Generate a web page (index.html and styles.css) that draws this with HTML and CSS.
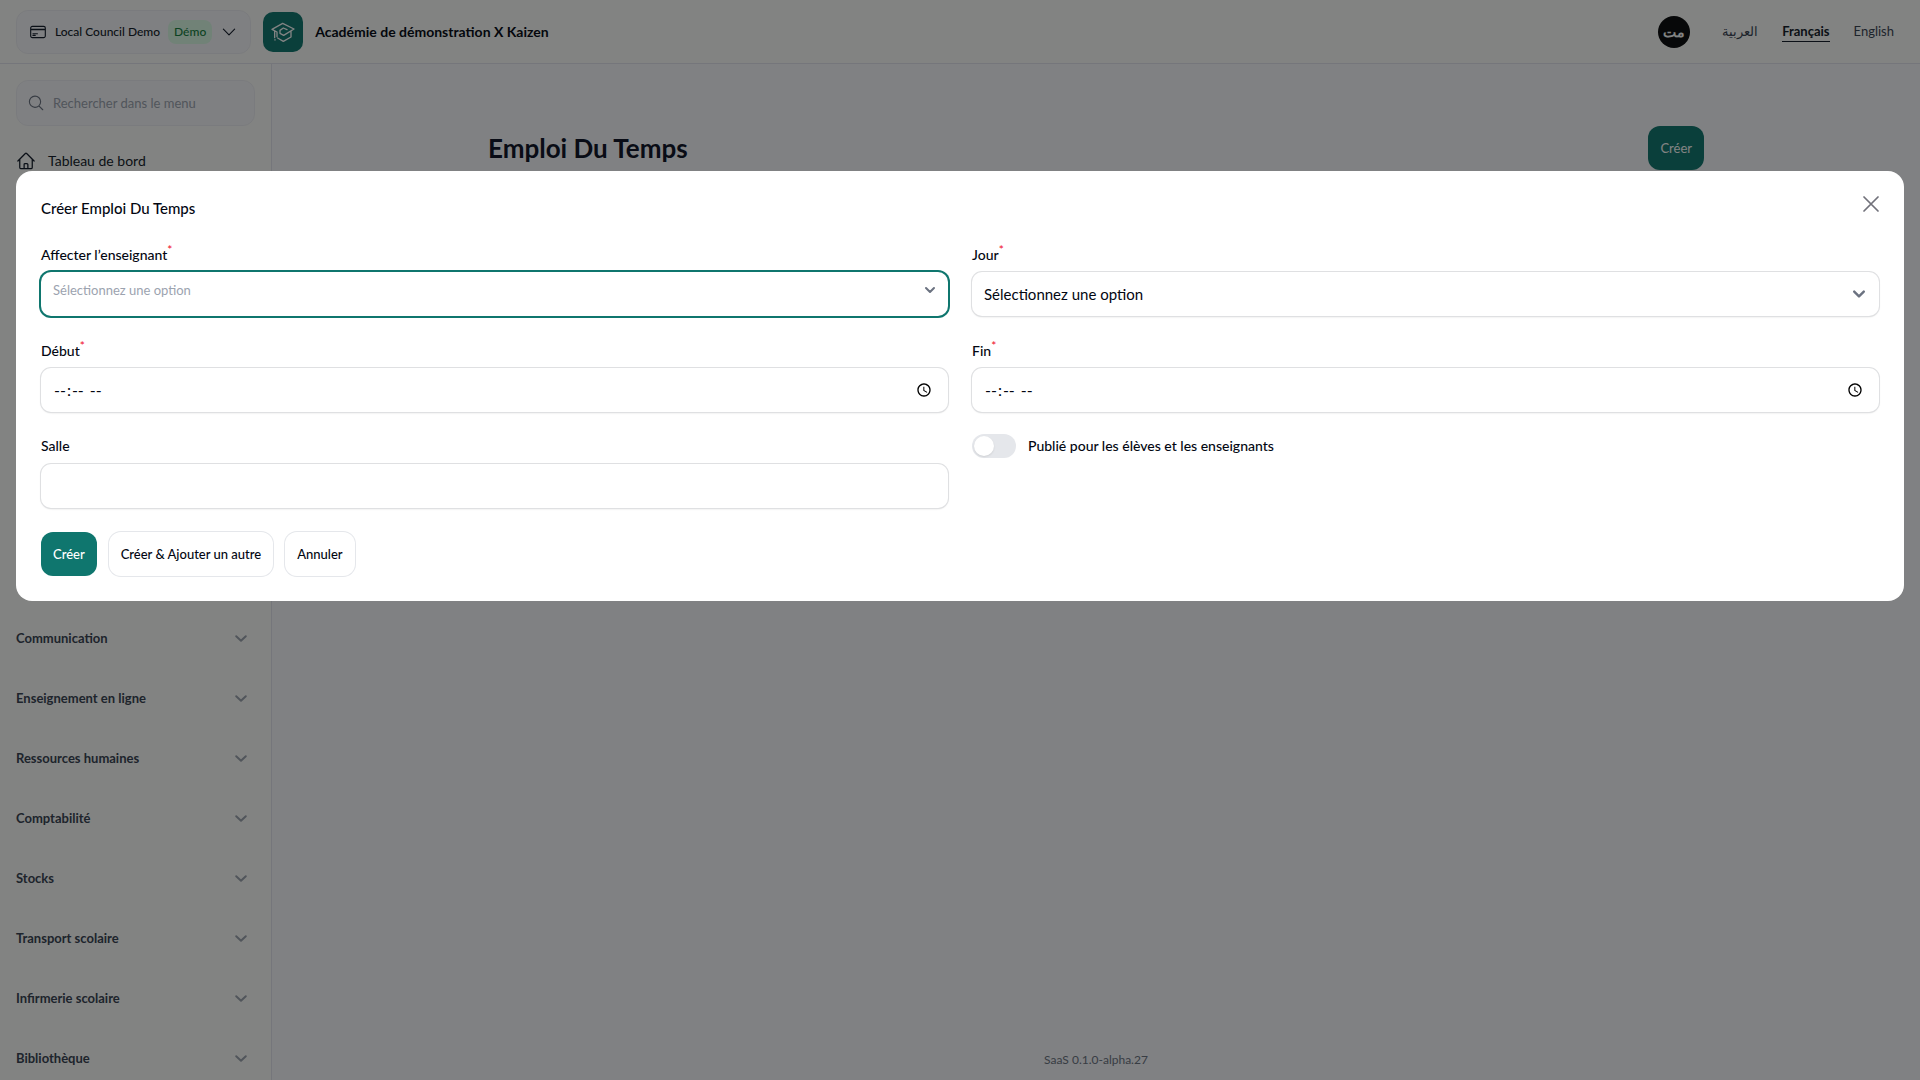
FILE: index.html
```
<!DOCTYPE html>
<html lang="fr">
<head>
    <meta charset="UTF-8">
    <meta name="viewport" content="width=device-width, initial-scale=1.0">
    <title>Emploi Du Temps</title>
    <link rel="stylesheet" href="styles.css">
</head>
<body>
    <header class="topbar">
        <button type="button" class="tenant-btn">
            <svg class="icon icon-sm" viewBox="0 0 24 24"><path d="M2.25 8.25h19.5M2.25 9h19.5m-16.5 5.25h6m-6 2.25h3m-3.75 3h15a2.25 2.25 0 0 0 2.25-2.25V6.75A2.25 2.25 0 0 0 19.5 4.5h-15a2.25 2.25 0 0 0-2.25 2.25v10.5A2.25 2.25 0 0 0 4.5 19.5Z"/></svg>
            <span>Local Council Demo</span>
            <span class="badge">Démo</span>
            <svg class="icon icon-sm" viewBox="0 0 24 24"><path d="m19.5 8.25-7.5 7.5-7.5-7.5"/></svg>
        </button>
        <a href="#" class="brand">
            <span class="brand-logo">
                <svg viewBox="0 0 72 66"><path d="M3 25 35 7 69 24 38 43 27 37V28L37 21 48 26M3 25 18 33V47M11 30V50M12 56v1M60 30V48L37 61 20 51"/></svg>
            </span>
            <span class="brand-name">Académie de démonstration X Kaizen</span>
        </a>
        <div class="topbar-end">
            <button type="button" class="avatar" lang="ar">مت</button>
            <nav class="langs">
                <a href="#" lang="ar">العربية</a>
                <a href="#" class="active">Français</a>
                <a href="#" lang="en">English</a>
            </nav>
        </div>
    </header>

    <div class="layout">
        <aside class="sidebar">
            <label class="search">
                <svg class="icon icon-sm" viewBox="0 0 24 24"><path d="m21 21-5.2-5.2m0 0A7.5 7.5 0 1 0 5.2 5.2a7.5 7.5 0 0 0 10.6 10.6Z"/></svg>
                <input type="search" placeholder="Rechercher dans le menu" aria-label="Rechercher dans le menu">
            </label>
            <a href="#" class="nav-item">
                <svg class="icon" viewBox="0 0 24 24"><path d="m2.25 12 8.95-8.95c.44-.44 1.15-.44 1.6 0L21.75 12M4.5 9.75v10.13c0 .62.5 1.12 1.13 1.12H9.75v-4.87c0-.63.5-1.13 1.13-1.13h2.25c.62 0 1.12.5 1.12 1.13V21h4.13c.62 0 1.12-.5 1.12-1.12V9.75M8.25 21h8.25"/></svg>
                Tableau de bord
            </a>
            <div class="nav-groups">
                <button type="button" class="nav-group">Communication <svg class="chevron" viewBox="0 0 20 20"><path d="m5.2 8.2 4.8 4.6 4.8-4.6"/></svg></button>
                <button type="button" class="nav-group">Enseignement en ligne <svg class="chevron" viewBox="0 0 20 20"><path d="m5.2 8.2 4.8 4.6 4.8-4.6"/></svg></button>
                <button type="button" class="nav-group">Ressources humaines <svg class="chevron" viewBox="0 0 20 20"><path d="m5.2 8.2 4.8 4.6 4.8-4.6"/></svg></button>
                <button type="button" class="nav-group">Comptabilité <svg class="chevron" viewBox="0 0 20 20"><path d="m5.2 8.2 4.8 4.6 4.8-4.6"/></svg></button>
                <button type="button" class="nav-group">Stocks <svg class="chevron" viewBox="0 0 20 20"><path d="m5.2 8.2 4.8 4.6 4.8-4.6"/></svg></button>
                <button type="button" class="nav-group">Transport scolaire <svg class="chevron" viewBox="0 0 20 20"><path d="m5.2 8.2 4.8 4.6 4.8-4.6"/></svg></button>
                <button type="button" class="nav-group">Infirmerie scolaire <svg class="chevron" viewBox="0 0 20 20"><path d="m5.2 8.2 4.8 4.6 4.8-4.6"/></svg></button>
                <button type="button" class="nav-group">Bibliothèque <svg class="chevron" viewBox="0 0 20 20"><path d="m5.2 8.2 4.8 4.6 4.8-4.6"/></svg></button>
            </div>
        </aside>

        <main class="main">
            <div class="page-header">
                <h1>Emploi Du Temps</h1>
                <button type="button" class="btn btn-primary btn-page">Créer</button>
            </div>
            <footer class="footer">SaaS 0.1.0-alpha.27</footer>
        </main>
    </div>

    <!-- Create modal -->
    <div class="overlay">
        <form class="modal" role="dialog" aria-labelledby="modalTitle">
            <div class="modal-header">
                <h2 id="modalTitle">Créer Emploi Du Temps</h2>
                <button type="button" class="close-btn" aria-label="Fermer">
                    <svg class="icon" viewBox="0 0 24 24"><path d="M6 18 18 6M6 6l12 12"/></svg>
                </button>
            </div>
            <div class="fields">
                <div class="field">
                    <label for="teacher">Affecter l’enseignant<sup>*</sup></label>
                    <select id="teacher" class="control control-focus">
                        <option>Sélectionnez une option</option>
                    </select>
                </div>
                <div class="field">
                    <label for="day">Jour<sup>*</sup></label>
                    <select id="day" class="control">
                        <option>Sélectionnez une option</option>
                    </select>
                </div>
                <div class="field">
                    <label for="start">Début<sup>*</sup></label>
                    <input type="time" id="start" class="control">
                </div>
                <div class="field">
                    <label for="end">Fin<sup>*</sup></label>
                    <input type="time" id="end" class="control">
                </div>
                <div class="field">
                    <label for="room">Salle</label>
                    <input type="text" id="room" class="control">
                </div>
                <div class="field">
                    <label class="toggle">
                        <input type="checkbox" role="switch">
                        Publié pour les élèves et les enseignants
                    </label>
                </div>
            </div>
            <div class="actions">
                <button type="submit" class="btn btn-primary">Créer</button>
                <button type="button" class="btn btn-outline">Créer &amp; Ajouter un autre</button>
                <button type="button" class="btn btn-outline">Annuler</button>
            </div>
        </form>
    </div>
</body>
</html>
```
FILE: styles.css
```
* { box-sizing: border-box; margin: 0; padding: 0; }
body { font-family: Lato, "Noto Sans", sans-serif; font-size: 14px; line-height: 20px; color: #030712; background-color: #fafafe; }
button, input, select { font: inherit; color: inherit; border: none; background: none; }
button { cursor: pointer; }
a { color: inherit; text-decoration: none; }

.icon { width: 20px; height: 20px; flex-shrink: 0; fill: none; stroke: currentColor; stroke-width: 1.5; stroke-linecap: round; stroke-linejoin: round; }
.icon-sm { width: 18px; height: 18px; }

/* Top bar */
.topbar {
    display: flex;
    align-items: center;
    height: 64px;
    padding: 0 26px 0 16px;
    background-color: #fffffc;
    border-bottom: 1px solid #e5e5ee;
}

.tenant-btn {
    display: flex;
    align-items: center;
    gap: 8px;
    height: 44px;
    padding: 0 12px;
    background-color: #f9f9fd;
    border: 1px solid #efeff4;
    border-radius: 12px;
    color: #111827;
    font-size: 12px;
    font-weight: 500;
    white-space: nowrap;
}

.badge {
    padding: 2px 6px;
    border-radius: 8px;
    background-color: #dcfce7;
    color: #15803d;
}

.brand { display: flex; align-items: center; gap: 12px; margin-left: 12px; }
.brand-name { font-weight: 700; }
.brand-logo {
    display: flex;
    align-items: center;
    justify-content: center;
    width: 40px;
    height: 40px;
    border-radius: 10px;
    background-color: #0f766e;
}
.brand-logo svg { width: 24px; height: 22px; fill: none; stroke: #fff; stroke-width: 4; stroke-linecap: round; stroke-linejoin: round; }

.topbar-end { display: flex; align-items: center; gap: 32px; margin-left: auto; }
.avatar { width: 32px; height: 32px; border-radius: 50%; background-color: #09090b; color: #fff; font-weight: 700; }
.langs { display: flex; gap: 24px; color: #374151; font-size: 13px; }
.langs .active { color: #111827; font-weight: 700; border-bottom: 1px solid #111827; }

/* Page */
.layout { display: flex; height: calc(100vh - 64px); }

.sidebar {
    display: flex;
    flex-direction: column;
    width: 272px;
    flex-shrink: 0;
    padding: 16px 16px 0;
    background-color: #fffffc;
    border-right: 1px solid #e5e5ee;
    overflow: hidden;
}

.search {
    display: flex;
    align-items: center;
    gap: 8px;
    height: 46px;
    flex-shrink: 0;
    padding: 0 10px;
    background-color: #f9f9fd;
    border: 1px solid #efeff4;
    border-radius: 12px;
    color: #6b7280;
    font-size: 13px;
}
.search input { flex: 1; min-width: 0; }
.search input::placeholder { color: #9ca3af; }

.nav-item { display: flex; align-items: center; gap: 12px; margin-top: 25px; color: #111827; }
.nav-groups { display: flex; flex-direction: column; gap: 16px; margin-top: auto; }
.nav-group {
    display: flex;
    align-items: center;
    justify-content: space-between;
    height: 44px;
    padding-right: 4px;
    color: #374151;
    font-size: 13px;
    font-weight: 700;
    text-align: left;
}
.chevron { width: 20px; height: 20px; fill: none; stroke: #9ca3af; stroke-width: 2; stroke-linecap: round; stroke-linejoin: round; }

.main { display: flex; flex-direction: column; flex: 1; }
.page-header {
    display: flex;
    align-items: center;
    justify-content: space-between;
    width: 74%;
    max-width: 1216px;
    margin: 62px auto 0;
}
.page-header h1 { font-size: 26px; line-height: 36px; color: #0c1024; }
.footer { margin-top: auto; padding-bottom: 10px; font-size: 12px; text-align: center; color: #6b7280; }

/* Buttons */
.btn { height: 44px; padding: 0 12px; border-radius: 12px; font-size: 13px; font-weight: 500; }
.btn-primary { background-color: #0f766e; color: #fff; }
.btn-outline { background-color: #fff; box-shadow: 0 0 0 1px #e5e7eb; }
.btn-page { font-weight: 400; }

/* Modal */
.overlay {
    position: fixed;
    inset: 0;
    padding: 171px 16px 0;
    background-color: rgba(6, 8, 8, 0.5);
}

.modal {
    padding: 25px;
    border-radius: 16px;
    background-color: #fff;
}

.modal-header { display: flex; justify-content: space-between; margin-bottom: 24px; }
.modal-header h2 { font-size: 15px; line-height: 24px; font-weight: 500; }
.close-btn { display: flex; align-items: center; justify-content: center; width: 16px; height: 16px; color: #71717a; }
.close-btn .icon { width: 28px; height: 28px; }

.fields { display: grid; grid-template-columns: 1fr 1fr; gap: 24px; }
.field { display: flex; flex-direction: column; gap: 8px; }
.field label { height: 20px; font-weight: 500; }
.field sup { color: #f0142f; font-size: 12px; line-height: 1; }

.control {
    width: 100%;
    height: 44px;
    padding: 0 12px;
    border-radius: 10px;
    background-color: #fff;
    box-shadow: 0 0 0 1px #dfe0e2, 0 1px 2px rgba(0, 0, 0, 0.15);
    font-size: 15px;
}
input[type="time"].control { font-size: 16px; }
select.control {
    appearance: none;
    background-image: url("data:image/svg+xml,%3Csvg xmlns='http://www.w3.org/2000/svg' viewBox='0 0 20 20' fill='none' stroke='%236b7280' stroke-width='2' stroke-linecap='round' stroke-linejoin='round'%3E%3Cpath d='m6 8 4 4 4-4'/%3E%3C/svg%3E");
    background-repeat: no-repeat;
    background-position: right 8px center;
    background-size: 24px 24px;
}
select.control-focus {
    padding-bottom: 8px;
    background-position: right 8px top 8px;
    background-size: 20px 20px;
    box-shadow: 0 0 0 2px #0f766e;
    color: #9ca3af;
    font-size: 13px;
}

.toggle { display: flex; align-items: center; gap: 12px; }
.toggle input {
    appearance: none;
    width: 44px;
    height: 24px;
    padding: 2px;
    border-radius: 12px;
    background-color: #e5e7eb;
}
.toggle input::before {
    content: "";
    display: block;
    width: 20px;
    height: 20px;
    border-radius: 50%;
    background-color: #fff;
    box-shadow: 0 1px 2px rgba(0, 0, 0, 0.1);
}
.toggle input:checked { background-color: #0f766e; }
.toggle input:checked::before { margin-left: 20px; }

.actions { display: flex; gap: 12px; margin-top: 24px; }
```
